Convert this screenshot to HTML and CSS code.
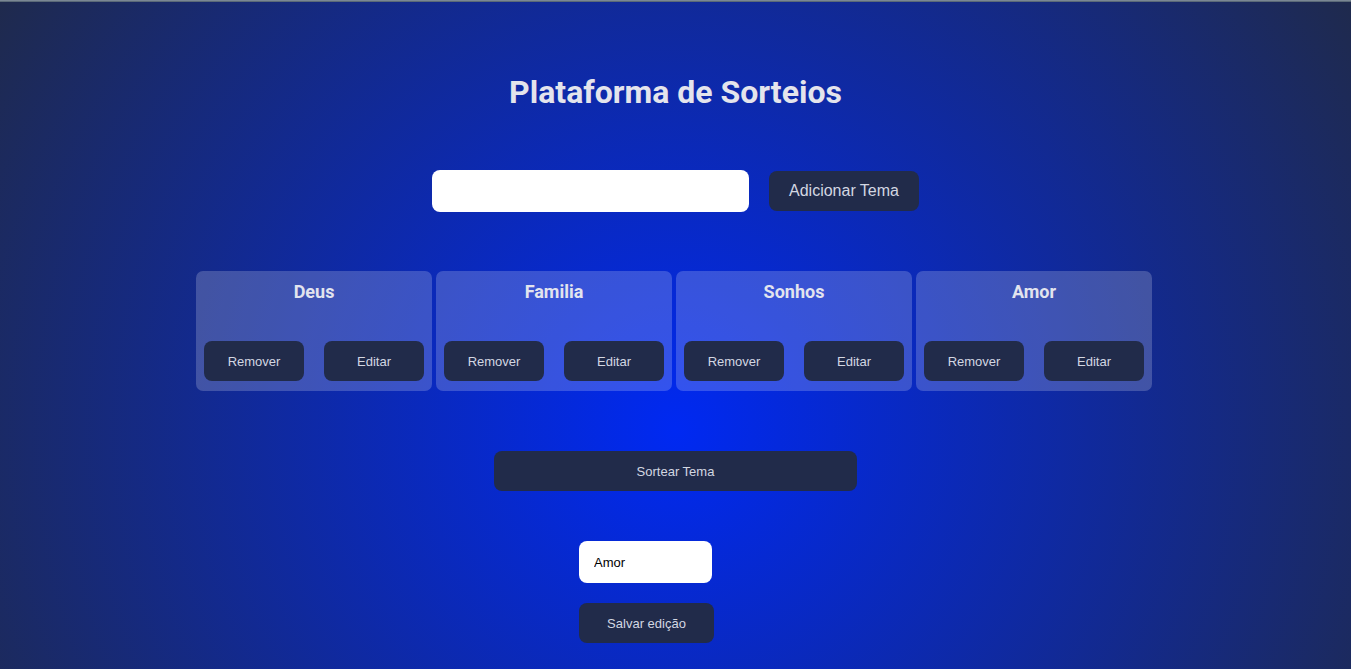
FILE: index.html
```html
<!DOCTYPE html>
<html lang="pt">
<head>
<meta charset="utf-8">
<title>Plataforma de Sorteios</title>
<link rel="stylesheet" href="styles.css">
</head>
<body>
<div class="topline"></div>
<main class="app">
  <h1 class="title">Plataforma de Sorteios</h1>
  <div class="add-row">
    <input class="add-input" type="text">
    <button class="btn btn-add">Adicionar Tema</button>
  </div>
  <div class="cards">
    <div class="card">
      <h2 class="card-title">Deus</h2>
      <div class="card-actions"><button class="btn btn-small">Remover</button><button class="btn btn-small">Editar</button></div>
    </div>
    <div class="card">
      <h2 class="card-title">Familia</h2>
      <div class="card-actions"><button class="btn btn-small">Remover</button><button class="btn btn-small">Editar</button></div>
    </div>
    <div class="card">
      <h2 class="card-title">Sonhos</h2>
      <div class="card-actions"><button class="btn btn-small">Remover</button><button class="btn btn-small">Editar</button></div>
    </div>
    <div class="card">
      <h2 class="card-title">Amor</h2>
      <div class="card-actions"><button class="btn btn-small">Remover</button><button class="btn btn-small">Editar</button></div>
    </div>
  </div>
  <button class="btn btn-draw">Sortear Tema</button>
  <div class="edit">
    <input class="edit-input" type="text" value="Amor">
    <button class="btn btn-save">Salvar edição</button>
  </div>
</main>
</body>
</html>
```

FILE: styles.css
```css
* { box-sizing: border-box; }
html, body { margin: 0; padding: 0; }
body {
  min-height: 669px;
  background: radial-gradient(circle 800px at 50% 430px, #0029f2 0%, #1f2a4d 100%);
  font-family: "Liberation Sans", Arial, sans-serif;
  overflow: hidden;
}
.topline {
  height: 2px;
  background: #5b6a78;
  border-top: 1px solid #7a8794;
}
.app {
  display: flex;
  flex-direction: column;
  align-items: center;
  padding-top: 71px;
}
.title {
  margin: 0;
  font-family: Roboto, "Liberation Sans", sans-serif;
  font-weight: 700;
  font-size: 32px;
  line-height: 38px;
  color: #e4e4ec;
}
.add-row {
  margin-top: 59px;
  display: flex;
  align-items: center;
  gap: 20px;
  height: 42px;
}
.add-input {
  width: 317px;
  height: 42px;
  border: none;
  border-radius: 8px;
  background: #fff;
  outline: none;
}
.btn {
  border: none;
  border-radius: 8px;
  background: #212b4a;
  color: #d3d7e2;
  font-family: "Liberation Sans", Arial, sans-serif;
  font-size: 13px;
  height: 40px;
  padding: 0;
  cursor: pointer;
}
.btn-add {
  width: 150px;
  font-size: 16px;
}
.cards {
  margin-top: 59px;
  margin-right: 3px;
  display: grid;
  grid-template-columns: repeat(4, 236px);
  gap: 4px;
}
.card {
  height: 120px;
  border-radius: 7px;
  background: rgba(255, 255, 255, 0.2);
  padding: 8px 8px 10px;
  display: flex;
  flex-direction: column;
}
.card-title {
  margin: 0;
  font-family: Roboto, "Liberation Sans", sans-serif;
  font-weight: 700;
  font-size: 18px;
  line-height: 26px;
  text-align: center;
  color: #e2e4ee;
}
.card-actions {
  margin-top: auto;
  display: flex;
  justify-content: space-between;
}
.btn-small { width: 100px; }
.btn-draw {
  margin-top: 60px;
  width: 363px;
}
.edit {
  margin-top: 50px;
  width: 193px;
  display: flex;
  flex-direction: column;
  align-items: flex-start;
  gap: 20px;
}
.edit-input {
  width: 133px;
  height: 42px;
  border: none;
  border-radius: 8px;
  background: #fff;
  padding: 0 15px;
  font-family: "Liberation Sans", Arial, sans-serif;
  font-size: 13px;
  color: #000;
  outline: none;
}
.btn-save { width: 135px; }
```
